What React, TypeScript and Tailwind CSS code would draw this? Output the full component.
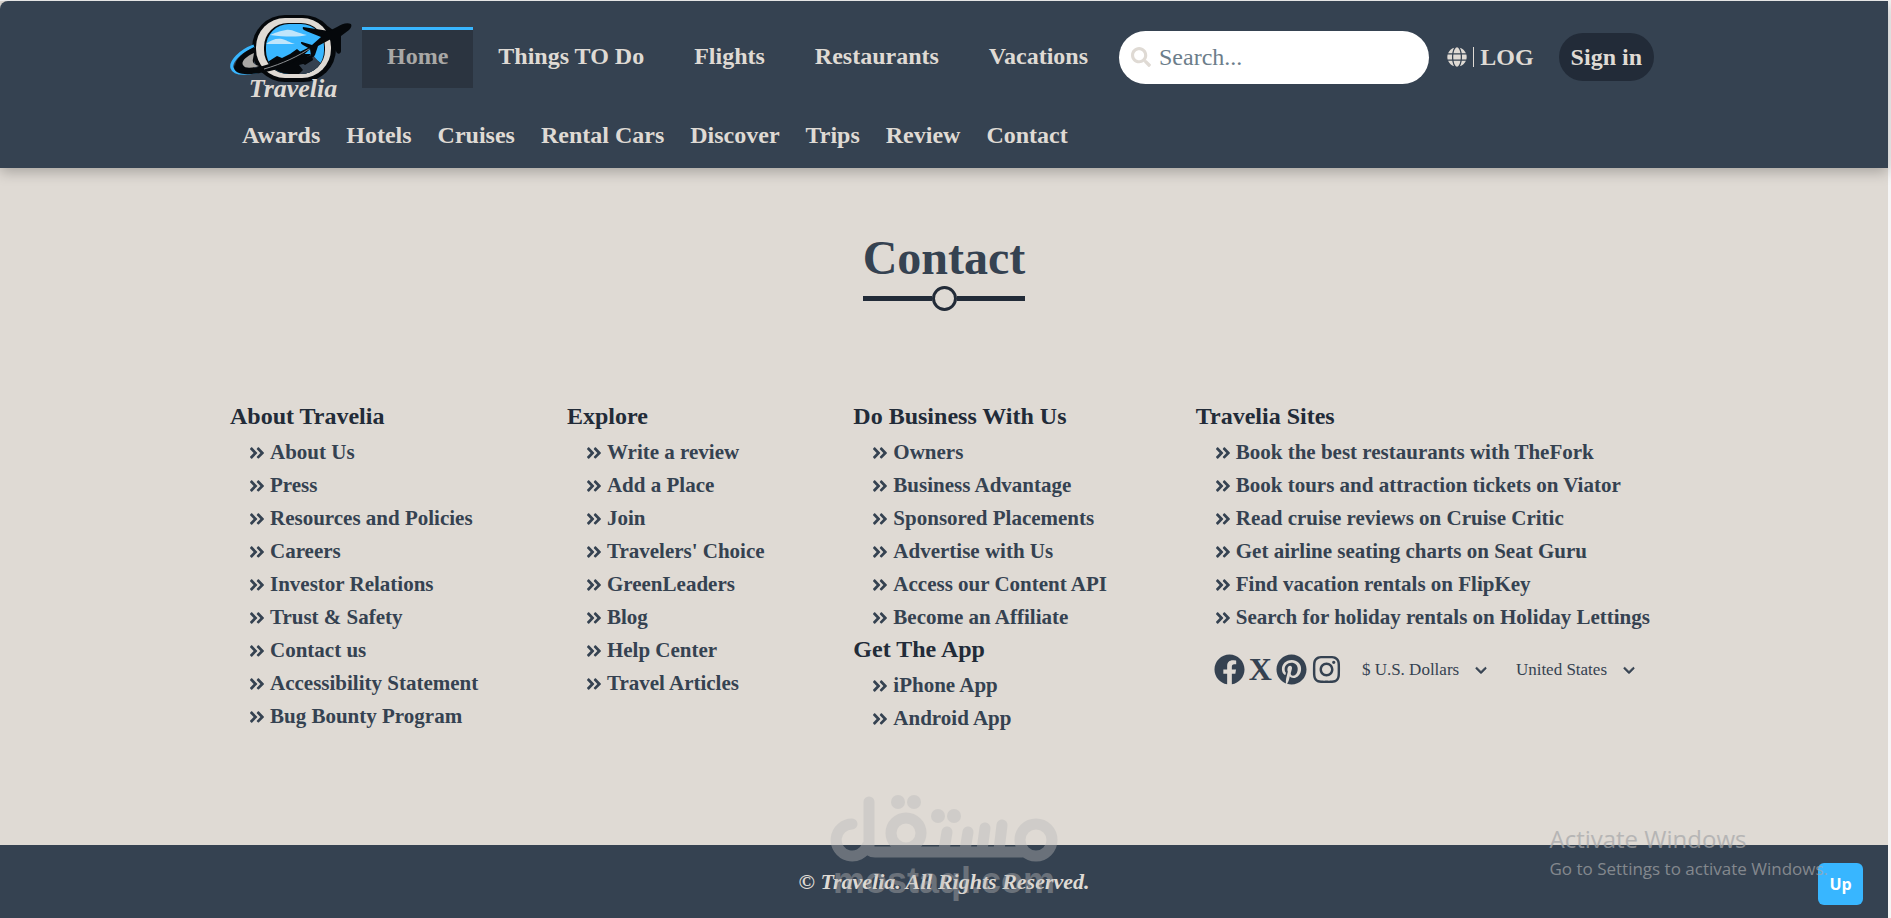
import { FaAngleDoubleRight, FaFacebook, FaGlobe, FaInstagram, FaPinterest, FaSearch } from "react-icons/fa";
import { FaAngleDown } from "react-icons/fa6";

const mainLinks = ["Things TO Do", "Flights", "Restaurants", "Vacations"];
const subLinks = ["Awards", "Hotels", "Cruises", "Rental Cars", "Discover", "Trips", "Review", "Contact"];

const about = [
  "About Us",
  "Press",
  "Resources and Policies",
  "Careers",
  "Investor Relations",
  "Trust & Safety",
  "Contact us",
  "Accessibility Statement",
  "Bug Bounty Program",
];
const explore = [
  "Write a review",
  "Add a Place",
  "Join",
  "Travelers' Choice",
  "GreenLeaders",
  "Blog",
  "Help Center",
  "Travel Articles",
];
const business = [
  "Owners",
  "Business Advantage",
  "Sponsored Placements",
  "Advertise with Us",
  "Access our Content API",
  "Become an Affiliate",
];
const apps = ["iPhone App", "Android App"];
const sites = [
  "Book the best restaurants with TheFork",
  "Book tours and attraction tickets on Viator",
  "Read cruise reviews on Cruise Critic",
  "Get airline seating charts on Seat Guru",
  "Find vacation rentals on FlipKey",
  "Search for holiday rentals on Holiday Lettings",
];

function Logo() {
  return (
    <svg viewBox="0 0 124 92" className="mt-1 h-[92px] w-[124px] shrink-0" role="img" aria-label="Travelia">
      <defs>
        <clipPath id="badge">
          <rect x="36" y="11" width="58" height="50" rx="23" />
        </clipPath>
      </defs>
      <rect x="22" y="2" width="84" height="67" rx="33" fill="#05080b" />
      <rect x="26" y="5" width="75" height="60" rx="29" fill="#dfdad4" />
      <rect x="34" y="10" width="61" height="51" rx="24" fill="#05080b" />
      <g clipPath="url(#badge)">
        <path d="M36 10h58v52H36z" fill="#38b6ff" />
        <path d="M40 22c5-2 9-4 16-5 7-1 10 3 21 5-9 2-21 2-37 0zM36 31c5-4 10-6 16-5 5 1 6 3 13 5H36z" fill="#bfe5fb" />
        <path d="M36 50l11-7 5 2 8-4 7-5 6 5 7 0 8 7 8 6v14H36z" fill="#05080b" />
        <path d="M68 62l5-5-4-5 8-2-2-5 7-4 6 7 8 6v12z" fill="#35414f" />
        <path d="M68 42l8 2 6-2 1 5-8 5-6-4z" fill="#05080b" />
      </g>
      <path
        d="M24 33C10 38 0 49 2 55c3 9 23 5 41-1 17-6 32-14 43-23"
        fill="none"
        stroke="#38b6ff"
        strokeWidth="3"
      />
      <path d="M5 51c-1 7 15 6 31 1 19-6 35-13 49-21C73 44 60 53 44 57 25 62 4 64 4 54z" fill="#05080b" />
      <path d="M24 34v24C14 60 5 59 5 53 5 46 14 39 24 34z" fill="#05080b" />
      <path d="M24 40c-9 4-13 9-11 12 2 4 9 3 16 1-5-1-7-4-6-7z" fill="#aaa8a5" />
      <path d="M34 56c18-5 35-13 48-22" fill="none" stroke="#8c8f92" strokeWidth="1" />
      <path
        d="M121 11c-4-2-9 0-14 3l-8 4-26-4c-1 2 1 3 3 4l15 6-9 8-10-3c-2 0-1 2 1 3l7 4 1 7c1 2 3 1 4-1l3-9 13-7 5 12c1 4 5 3 5 0V23l8-6c2-2 3-4 2-6z"
        fill="#05080b"
      />
      <path d="M97 19l-1-5c1-1 2-1 3 0l4 3z" fill="#05080b" />
      <text
        x="63"
        y="84"
        textAnchor="middle"
        fontSize="26"
        fontStyle="italic"
        fontWeight="700"
        fontFamily="Liberation Serif, serif"
        fill="#dfdad4"
      >
        Travelia
      </text>
    </svg>
  );
}

function LinkList({ title, items }: { title: string; items: string[] }) {
  return (
    <section>
      <h2 className="mb-[5px] text-2xl leading-[30px] font-bold text-[#222b38]">{title}</h2>
      <ul className="pl-[18px]">
        {items.map((item) => (
          <li key={item}>
            <a href="#" className="flex items-center gap-1 text-[21px] leading-[33px] font-bold whitespace-nowrap">
              <FaAngleDoubleRight className="size-[18px]" />
              {item}
            </a>
          </li>
        ))}
      </ul>
    </section>
  );
}

function Picker({ label, value }: { label: string; value: string }) {
  return (
    <div className="relative flex items-center">
      <select aria-label={label} className="appearance-none bg-transparent pr-7 text-[17px] outline-none">
        <option>{value}</option>
      </select>
      <FaAngleDown className="pointer-events-none absolute right-0 size-[14px] stroke-[#354251] stroke-[24]" />
    </div>
  );
}

function Watermark() {
  return (
    <div className="pointer-events-none absolute bottom-5 left-1/2 w-[228px] -translate-x-1/2 text-[#b9b9b9] opacity-40">
      <svg viewBox="0 0 228 70" className="block w-full" fill="none" stroke="currentColor" strokeLinecap="round">
        <path
          d="M22 30a16 16 0 1 0 15 22Q39 58 45 58H192M39 8v46"
          strokeWidth="11"
          strokeLinejoin="round"
        />
        <circle cx="76" cy="39" r="15" strokeWidth="11" />
        <circle cx="206" cy="46" r="16" strokeWidth="11" />
        <path d="M117 38l-3 18M138 38l-3 18M155 34l-3 22M172 31l-3 25" strokeWidth="11" />
        <g fill="currentColor" stroke="none">
          <circle cx="68" cy="8" r="7" />
          <circle cx="84" cy="8" r="7" />
          <circle cx="108" cy="22" r="7" />
          <circle cx="124" cy="22" r="7" />
        </g>
      </svg>
      <p className="text-center font-['Liberation_Sans',sans-serif] text-4xl leading-[34px] font-bold">mostaql.com</p>
    </div>
  );
}

export default function App() {
  return (
    <div className="relative flex min-h-screen flex-col border-t border-r-3 border-[#f5f5f5] bg-[#dfdad4] font-['Liberation_Serif',serif] text-[#354251]">
      <header className="rounded-tl-lg bg-[#354251] pb-[11px] text-2xl font-bold text-[#dfdad4] shadow-[0_4px_14px_rgba(0,0,0,0.25)]">
        <div className="mx-auto w-full max-w-[1428px] pr-1">
          <div className="flex h-[112px] items-center">
            <Logo />
            <nav aria-label="Main" className="ml-2 flex">
              <a href="#" className="border-t-3 border-[#38b6ff] bg-[#2b3440] px-[25px] pt-[10px] pb-[15px] leading-[33px] text-[#a9a8a6]">
                Home
              </a>
              {mainLinks.map((link) => (
                <a key={link} href="#" className="border-t-3 border-transparent px-[25px] pt-[10px] pb-[15px] leading-[33px] whitespace-nowrap">
                  {link}
                </a>
              ))}
            </nav>
            <label className="ml-[6px] flex h-[53px] min-w-0 flex-1 items-center gap-2 rounded-full bg-white px-3">
              <FaSearch className="size-5 shrink-0" />
              <input
                type="search"
                aria-label="Search"
                placeholder="Search..."
                className="w-full min-w-0 font-normal text-[#354251] outline-none placeholder:text-[#6c7d8a]"
              />
            </label>
            <a href="#" className="ml-[18px] flex items-center gap-[6px]">
              <FaGlobe className="size-5" />
              <span className="h-5 w-px bg-[#dfdad4]" />
              LOG
            </a>
            <button type="button" className="ml-[25px] h-12 rounded-full bg-[#222b38] px-3 whitespace-nowrap">
              Sign in
            </button>
          </div>
          <nav aria-label="More" className="flex gap-[26px] px-3 leading-[44px]">
            {subLinks.map((link) => (
              <a key={link} href="#">
                {link}
              </a>
            ))}
          </nav>
        </div>
      </header>

      <main className="mx-auto w-full max-w-[1428px] grow pb-24">
        <div className="mx-auto mt-[65px] flex w-fit flex-col items-center">
          <h1 className="text-5xl leading-[50px] font-bold">Contact</h1>
          <div className="mt-[3px] flex w-full items-center">
            <span className="h-[5px] flex-1 bg-[#222b38]" />
            <span className="size-[25px] rounded-full border-3 border-[#222b38]" />
            <span className="h-[5px] flex-1 bg-[#222b38]" />
          </div>
        </div>

        <div className="mt-[90px] flex justify-between pr-2">
          <LinkList title="About Travelia" items={about} />
          <LinkList title="Explore" items={explore} />
          <div>
            <LinkList title="Do Business With Us" items={business} />
            <LinkList title="Get The App" items={apps} />
          </div>
          <div>
            <LinkList title="Travelia Sites" items={sites} />
            <div className="mt-5 flex items-center pl-[18px]">
              <div className="flex items-center gap-1">
                <a href="#" aria-label="Facebook">
                  <FaFacebook className="size-[31px]" />
                </a>
                <a href="#" className="text-[32px] leading-[31px] font-bold">
                  X
                </a>
                <a href="#" aria-label="Pinterest">
                  <FaPinterest className="size-[31px]" />
                </a>
                <a href="#" aria-label="Instagram">
                  <FaInstagram className="size-[31px]" />
                </a>
              </div>
              <div className="ml-5 flex gap-7">
                <Picker label="Currency" value="$ U.S. Dollars" />
                <Picker label="Country" value="United States" />
              </div>
            </div>
          </div>
        </div>
      </main>

      <footer className="bg-[#354251] text-center text-[22px] leading-[73px] font-bold text-[#dfdad4] italic">
        © Travelia. All Rights Reserved.
      </footer>

      <button
        type="button"
        className="absolute right-[25px] bottom-[13px] h-[42px] w-[45px] rounded-md bg-[#38b6ff] font-['Open_Sans',sans-serif] text-base font-bold text-white"
      >
        Up
      </button>
      <Watermark />
      <div className="pointer-events-none absolute right-[60px] bottom-[35px] font-['Open_Sans',sans-serif] text-[#a5a6a8] opacity-70">
        <p className="text-2xl leading-8">Activate Windows</p>
        <p className="text-[17px] leading-7">Go to Settings to activate Windows.</p>
      </div>
    </div>
  );
}
